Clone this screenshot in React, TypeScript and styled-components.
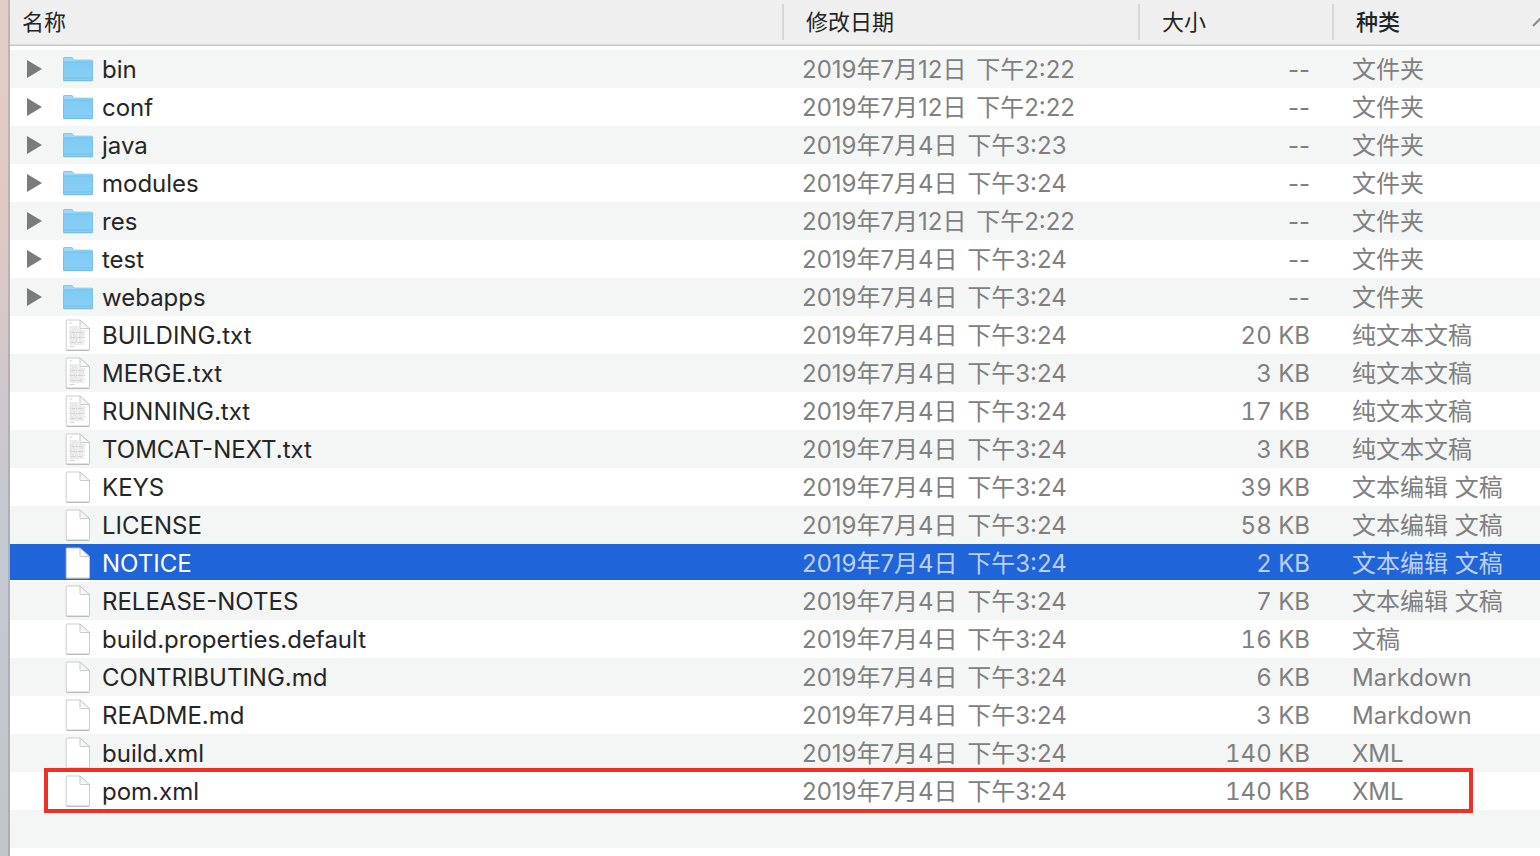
import React from "react";
import styled, { createGlobalStyle, css } from "styled-components";

const GlobalStyle = createGlobalStyle`
  *, *::before, *::after { box-sizing: border-box; }
  html, body, #root { height: 100%; }
  body {
    margin: 0;
    overflow: hidden;
    background: #fff;
    font-family: Inter, "Noto Sans CJK SC", sans-serif;
  }
`;

type Kind = "folder" | "text" | "blank";

interface Entry {
  name: string;
  day: string;
  time: string;
  size: string;
  type: string;
  icon: Kind;
  selected?: boolean;
  outlined?: boolean;
}

const folder = (name: string, day: string, time: string): Entry => ({
  name,
  day,
  time,
  size: "--",
  type: "文件夹",
  icon: "folder",
});

const file = (
  name: string,
  size: string,
  type: string,
  extra: Partial<Entry> = {}
): Entry => ({
  name,
  day: "2019年7月4日",
  time: "下午3:24",
  size,
  type,
  icon: "blank",
  ...extra,
});

const entries: Entry[] = [
  folder("bin", "2019年7月12日", "下午2:22"),
  folder("conf", "2019年7月12日", "下午2:22"),
  folder("java", "2019年7月4日", "下午3:23"),
  folder("modules", "2019年7月4日", "下午3:24"),
  folder("res", "2019年7月12日", "下午2:22"),
  folder("test", "2019年7月4日", "下午3:24"),
  folder("webapps", "2019年7月4日", "下午3:24"),
  file("BUILDING.txt", "20 KB", "纯文本文稿", { icon: "text" }),
  file("MERGE.txt", "3 KB", "纯文本文稿", { icon: "text" }),
  file("RUNNING.txt", "17 KB", "纯文本文稿", { icon: "text" }),
  file("TOMCAT-NEXT.txt", "3 KB", "纯文本文稿", { icon: "text" }),
  file("KEYS", "39 KB", "文本编辑 文稿"),
  file("LICENSE", "58 KB", "文本编辑 文稿"),
  file("NOTICE", "2 KB", "文本编辑 文稿", { selected: true }),
  file("RELEASE-NOTES", "7 KB", "文本编辑 文稿"),
  file("build.properties.default", "16 KB", "文稿"),
  file("CONTRIBUTING.md", "6 KB", "Markdown"),
  file("README.md", "3 KB", "Markdown"),
  file("build.xml", "140 KB", "XML"),
  file("pom.xml", "140 KB", "XML", { outlined: true }),
];

const Window = styled.main`
  display: flex;
  min-height: 100%;
`;

const SidebarEdge = styled.div`
  flex: none;
  width: 10px;
  border-right: 2px solid rgba(120, 120, 120, 0.3);
  background: linear-gradient(#e5cdc6 0%, #e0c9c5 25%, #cfc8cc 45%, #c5c8d2 62%, #c3c7cc 90%, #c2c6c8 100%);
`;

const ListPane = styled.div`
  flex: 1;
  min-width: 0;
  overflow: hidden;
`;

const FileTable = styled.table`
  width: 100%;
  table-layout: fixed;
  border-collapse: collapse;
`;

const DateCol = styled.col`
  width: 356px;
`;
const SizeCol = styled.col`
  width: 194px;
`;
const KindCol = styled.col`
  width: 206px;
`;

const HeaderCell = styled.th`
  padding: 0 0 4px;
  font-weight: inherit;
`;

const HeaderBar = styled.div`
  height: 46px;
  padding: 4px 0;
  background: #efefef;
  border-bottom: 1px solid #c6c6c6;
  box-shadow: inset 0 -1px #dedede;
`;

const SortButton = styled.button<{ $first?: boolean; $active?: boolean }>`
  display: flex;
  align-items: center;
  justify-content: space-between;
  width: 100%;
  height: 36px;
  padding: 0 0 0 ${(p) => (p.$first ? 12 : 22)}px;
  border: 0;
  border-right: ${(p) => (p.$active ? "0" : "2px solid #d6d6d6")};
  background: none;
  color: #242424;
  font-family: inherit;
  font-size: 22px;
  font-weight: ${(p) => (p.$active ? 500 : 400)};
  line-height: 36px;
  text-align: left;
`;

const SortArrow = styled.svg`
  flex: none;
  width: 16px;
  height: 10px;
  margin-right: -8px;
`;

const Cell = styled.td`
  height: 38px;
  padding: 2px 0 0 18px;
  color: #808080;
  font-size: 24px;
  line-height: 36px;
  text-align: left;
  white-space: nowrap;
`;

const SizeCell = styled(Cell)<{ $empty: boolean }>`
  padding-right: 24px;
  font-variant-numeric: ${(p) => (p.$empty ? "normal" : "tabular-nums")};
  text-align: right;
`;

const NameCell = styled(Cell)`
  padding: 0 0 0 17px;
  color: #262626;
`;

const Time = styled.span`
  margin-left: 3px;
`;

const Outline = styled.span`
  position: absolute;
  z-index: 1;
  inset: -4px 67px -3px 34px;
  border: 4px solid #ee3124;
  pointer-events: none;
`;

const Row = styled.tr<{ $selected?: boolean }>`
  position: relative;

  &:nth-child(odd) {
    background: #f4f5f5;
  }

  ${(p) =>
    p.$selected &&
    css`
      && {
        background: linear-gradient(#2064da 36px, #fff 36px);
      }
      ${Cell} {
        color: #bcd0f5;
      }
      ${NameCell} {
        color: #fff;
      }
    `}
`;

const NameLine = styled.div`
  display: flex;
  align-items: center;
  height: 38px;
`;

const FileName = styled.span`
  padding-top: 2px;
`;

const Disclosure = styled.button`
  display: flex;
  width: 15px;
  height: 18px;
  padding: 0;
  border: 0;
  background: none;
`;

const DisclosureSpace = styled.span`
  width: 15px;
`;

const IconSlot = styled.span`
  display: flex;
  justify-content: center;
  width: 32px;
  margin: 0 8px 0 20px;
`;

const Triangle = () => (
  <svg width="15" height="18" viewBox="0 0 15 18" aria-hidden="true">
    <path d="M0 0L15 9L0 18Z" fill="#7b7b7b" />
  </svg>
);

const FolderIcon = () => (
  <svg width="32" height="26" viewBox="0 0 32 26" aria-hidden="true">
    <path d="M1 24.6h30v.5q0 .5-1 .5H2q-1 0-1-.5z" fill="#000" opacity=".12" />
    <path d="M1 3Q1 1 2.600 1H9q1.200 0 1.900 1l.6.9q.5.9 1.700.9H29.500Q31 3.800 31 5.400V23.500Q31 25 29.500 25h-27Q1 25 1 23.500Z" fill="#69b5e2" />
    <path d="M1.500 3Q1.500 1.500 2.800 1.500H9q1 0 1.500.8l.7 1q.6 1 1.900 1H29.400q1.100 0 1.100 1.100V8h-29z" fill="#9ad9f8" />
    <path d="M1.500 6h29v17.200q0 1-1.100 1H2.600q-1.100 0-1.100-1z" fill="url(#folder-front)" />
    <path d="M1.500 5.800h29" stroke="#6fbce8" strokeWidth=".8" />
    <path d="M1.500 22h29" stroke="#6cb9e6" strokeWidth=".7" />
  </svg>
);

const textLines: [number, number, string][] = [
  [4, 3, "3"],
  [8, 9, "4 .6 3 .4"],
  [10, 12, "2 .5 5 .5"],
  [12, 16, "5 .4 3 .6"],
  [13.5, 15, "1.500 .5 4 .4"],
  [15, 16, "6 .5 2 .5"],
  [17, 15, "3 .4 4.500 .6"],
  [18.5, 16, "5.500 .5 1.500 .4"],
  [20, 14, "2.500 .5 6 .5"],
  [22, 16, "4.500 .5 3.500 .5"],
  [23.5, 13, "1 .5 5 .5"],
  [25, 15, "3.500 .4 2 .5"],
  [27.5, 5, "5"],
];

const DocumentIcon = ({ lines }: { lines: boolean }) => (
  <svg width="26" height="32" viewBox="0 0 26 32" aria-hidden="true">
    <path d="M1.200 1.700Q1.200 1 2 1H15L24.500 10V30.500q0 .7-.7.7H2q-.8 0-.8-.7z" fill="#fff" stroke="#c6c6c6" strokeWidth=".9" />
    <path d="M1.500 31.300H24.200" stroke="#aaa" strokeWidth=".8" />
    {lines &&
      textLines.map(([y, w, dash]) => (
        <path key={y} d={`M4.500 ${y}h${w}`} stroke="#c6c6c6" strokeWidth=".8" strokeDasharray={dash} />
      ))}
    <path d="M15 1V8.800q0 .7.7.7H24.500z" fill="url(#page-fold)" stroke="#c3c3c3" strokeWidth=".9" strokeLinejoin="round" />
  </svg>
);

const Gradients = styled.svg`
  position: absolute;
  width: 0;
  height: 0;
`;

const columns = ["名称", "修改日期", "大小", "种类"];

export default function App() {
  return (
    <Window>
      <GlobalStyle />
      <Gradients aria-hidden="true">
        <defs>
          <linearGradient id="folder-front" x1="0" y1="0" x2="0" y2="1">
            <stop offset="0" stopColor="#7dcbf5" />
            <stop offset="1" stopColor="#8bcff6" />
          </linearGradient>
          <linearGradient id="page-fold" x1="0" y1="1" x2="1" y2="0">
            <stop offset="0" stopColor="#fff" />
            <stop offset="1" stopColor="#e6e6e6" />
          </linearGradient>
        </defs>
      </Gradients>
      <SidebarEdge />
      <ListPane>
        <FileTable>
          <colgroup>
            <col />
            <DateCol />
            <SizeCol />
            <KindCol />
          </colgroup>
          <thead>
            <tr>
              {columns.map((label, i) => {
                const active = i === columns.length - 1;
                return (
                  <HeaderCell key={label} scope="col" aria-sort={active ? "ascending" : undefined}>
                    <HeaderBar>
                      <SortButton type="button" $first={i === 0} $active={active}>
                        {label}
                        {active && (
                          <SortArrow viewBox="0 0 16 10" aria-hidden="true">
                            <path d="M1 9L8 2L15 9" fill="none" stroke="#8a8a8a" strokeWidth="2" />
                          </SortArrow>
                        )}
                      </SortButton>
                    </HeaderBar>
                  </HeaderCell>
                );
              })}
            </tr>
          </thead>
          <tbody>
            {entries.map((entry) => (
              <Row key={entry.name} $selected={entry.selected}>
                <NameCell>
                  <NameLine>
                    {entry.icon === "folder" ? (
                      <Disclosure type="button" aria-label={entry.name} aria-expanded={false}>
                        <Triangle />
                      </Disclosure>
                    ) : (
                      <DisclosureSpace />
                    )}
                    <IconSlot>
                      {entry.icon === "folder" ? <FolderIcon /> : <DocumentIcon lines={entry.icon === "text"} />}
                    </IconSlot>
                    <FileName>{entry.name}</FileName>
                  </NameLine>
                  {entry.outlined && <Outline />}
                </NameCell>
                <Cell>
                  {entry.day} <Time>{entry.time}</Time>
                </Cell>
                <SizeCell $empty={entry.size === "--"}>{entry.size}</SizeCell>
                <Cell>{entry.type}</Cell>
              </Row>
            ))}
            <Row>
              <Cell colSpan={4} />
            </Row>
          </tbody>
        </FileTable>
      </ListPane>
    </Window>
  );
}
